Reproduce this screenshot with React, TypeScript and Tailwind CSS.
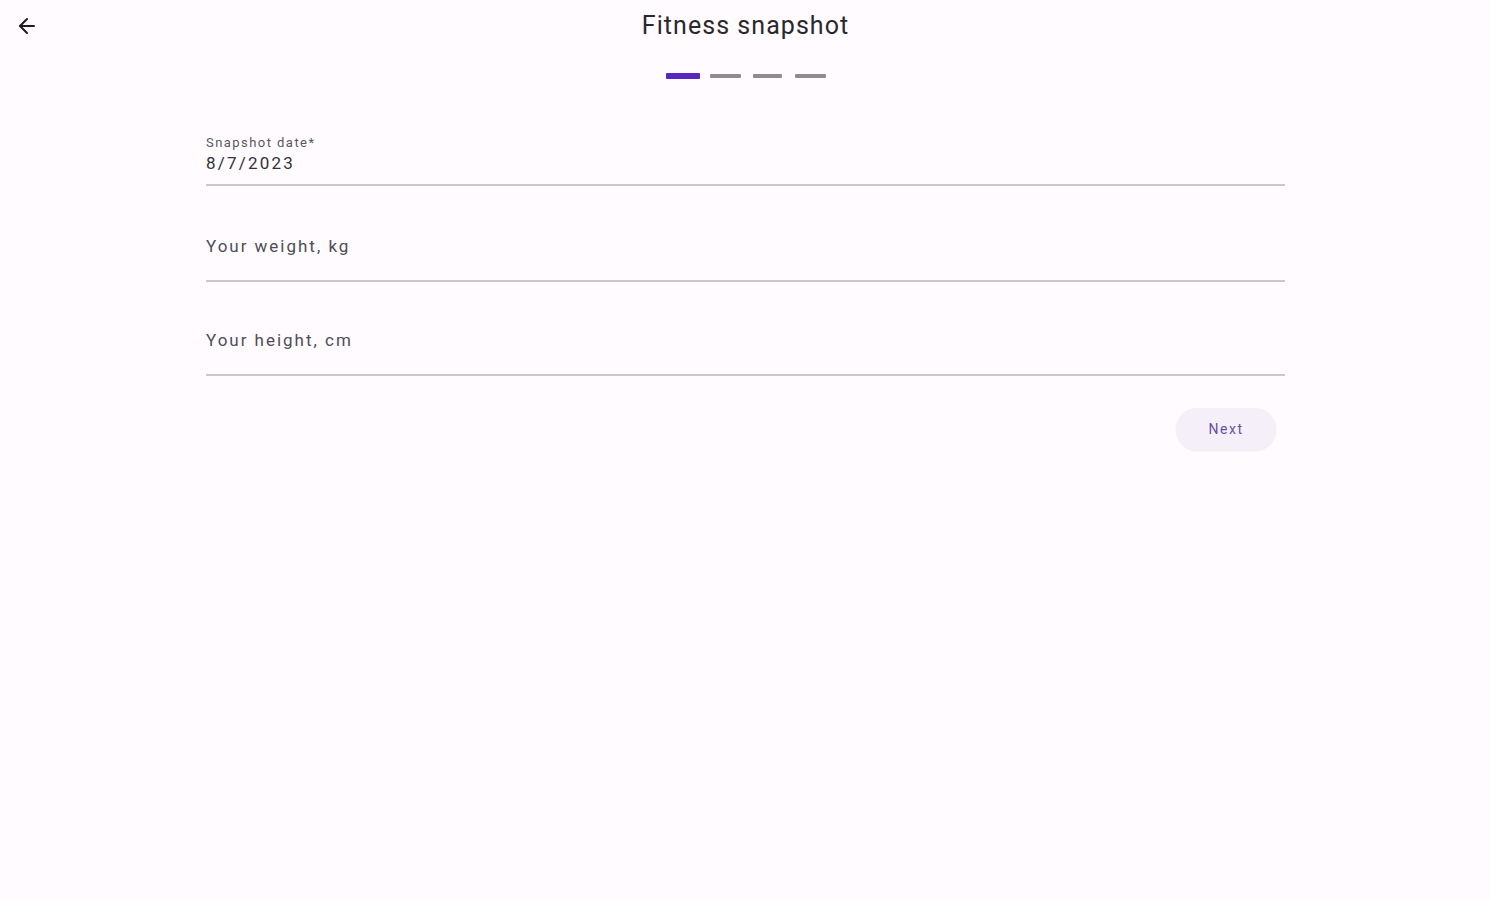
import { ArrowLeft } from "lucide-react";

function Field({ label, value, h }: { label: string; value?: string; h: string }) {
  return (
    <div className={`flex flex-col justify-end ${h}`}>
      {value ? (
        <div className="flex flex-col pb-[10px]">
          <span className="text-[13px] leading-[16px] tracking-[1.45px] text-[#5a5760]">{label}</span>
          <span className="mt-[1px] text-[17px] leading-[22px] tracking-[2.2px] text-[#333138]">{value}</span>
        </div>
      ) : (
        <div className="pb-[23px] text-[17px] leading-[22px] tracking-[1.98px] text-[#4f4c55]">{label}</div>
      )}
      <div className="h-[2px] bg-[#cac6cd]" />
    </div>
  );
}

export default function App() {
  return (
    <div
      className="min-h-[900px] w-full bg-[#fffbfe]"
      style={{ fontFamily: "Roboto, 'Liberation Sans', sans-serif" }}
    >
      <div className="relative flex h-[52px] items-center justify-center">
        <button className="absolute left-[15px] top-[14px] flex h-6 w-6 items-center justify-center text-[#1c1b1f]">
          <ArrowLeft className="h-6 w-6" strokeWidth={2} />
        </button>
        <h1 className="text-[25px] leading-[32px] tracking-[1.05px] text-[#2a282e]">Fitness snapshot</h1>
      </div>

      <div className="mt-[21px] flex items-center justify-center">
        <div className="h-[6px] w-[34px] rounded-[1px] bg-[#5727c0]" />
        <div className="ml-[10px] h-[4px] w-[31px] rounded-[1px] bg-[#8e8c90]" />
        <div className="ml-[12px] h-[4px] w-[29px] rounded-[1px] bg-[#8e8c90]" />
        <div className="ml-[13px] h-[4px] w-[31px] rounded-[1px] bg-[#8e8c90]" />
      </div>

      <div className="mx-auto mt-[13px] w-[1079px]">
        <Field label="Snapshot date*" value="8/7/2023" h="h-[94px]" />
        <Field label="Your weight, kg" h="h-[96px]" />
        <Field label="Your height, cm" h="h-[94px]" />
        <div className="mt-[32px] flex justify-end pr-[9px]">
          <button className="h-[42px] w-[100px] rounded-full bg-[#f5effa] text-[14px] tracking-[1.5px] text-[#6750a4] shadow-[0_1px_2px_rgba(0,0,0,0.08)]">
            Next
          </button>
        </div>
      </div>
    </div>
  );
}
